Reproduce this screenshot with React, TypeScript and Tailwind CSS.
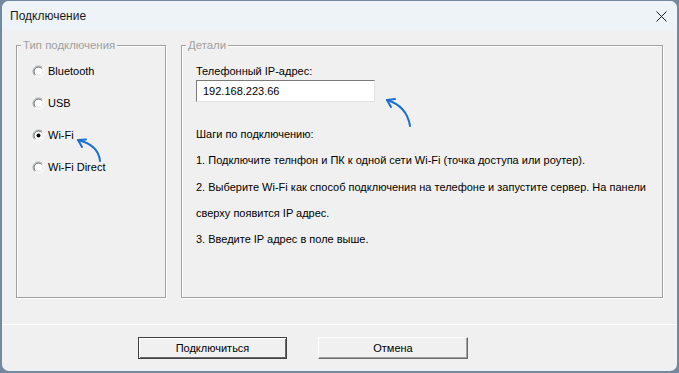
import React from "react";

const Radio: React.FC<{ checked?: boolean }> = ({ checked }) => (
  <svg width="13" height="13" viewBox="0 0 13 13" className="shrink-0">
    <circle cx="6.5" cy="6.5" r="5.5" fill="#fff" stroke="#ffffff" />
    <path d="M2.6 10.4 A5.5 5.5 0 0 1 10.4 2.6" stroke="#a0a0a0" fill="none" />
    <circle cx="6.5" cy="6.5" r="4.5" fill="#fff" stroke="#e3e3e3" />
    <path d="M3.3 9.7 A4.5 4.5 0 0 1 9.7 3.3" stroke="#696969" fill="none" />
    {checked && <circle cx="6.5" cy="6.5" r="2" fill="#000" />}
  </svg>
);

const GroupBox: React.FC<{
  title: string;
  className?: string;
  children: React.ReactNode;
}> = ({ title, className, children }) => (
  <fieldset
    className={`border border-[#a0a0a0] shadow-[inset_1px_1px_0_#fff,1px_1px_0_#fff] ${className ?? ""}`}
  >
    <legend className="ml-[4px] px-[2px] bg-[#f0f0f0] leading-[13px] text-[11.4px] text-[#a0a0a0]">
      {title}
    </legend>
    {children}
  </fieldset>
);

const connectionTypes = [
  { name: "Bluetooth", checked: false },
  { name: "USB", checked: false },
  { name: "Wi-Fi", checked: true },
  { name: "Wi-Fi Direct", checked: false },
];

export default function App() {
  return (
    <div className="relative w-[679px] h-[373px] overflow-hidden bg-[#7389a0] pt-px pl-[2px] font-['Liberation_Sans',Arial,sans-serif] text-[11px] text-black">
      <div className="w-[675px] h-[370px] rounded-[7px] overflow-hidden bg-[#f0f0f0] flex flex-col">
        {/* Title bar */}
        <div className="h-[30px] shrink-0 bg-[#eef3f8] flex items-center justify-between pl-[8px] pr-[10px]">
          <span className="text-[12px] text-[#1a1a1a]">Подключение</span>
          <svg width="11" height="11" viewBox="0 0 11 11">
            <path d="M0.5 0.5 L10.5 10.5 M10.5 0.5 L0.5 10.5" stroke="#1a1a1a" strokeWidth="1" />
          </svg>
        </div>

        {/* Body */}
        <div className="flex-1 flex flex-col">
          <div className="flex gap-[15px] pl-[14px] pt-[8px]">
            <GroupBox title="Тип подключения" className="w-[150px] h-[259px]">
              <div className="flex flex-col gap-[16px] pl-[15px] pt-[11px]">
                {connectionTypes.map((t) => (
                  <label key={t.name} className="h-[16px] flex items-center gap-[3px]">
                    <Radio checked={t.checked} />
                    <span>{t.name}</span>
                  </label>
                ))}
              </div>
            </GroupBox>

            <GroupBox title="Детали" className="w-[482px] h-[259px]">
              <div className="pl-[14px] pt-[13px]">
                <div className="leading-[13px]">Телефонный IP-адрес:</div>
                <div className="mt-[2px] w-[179px] h-[22px] bg-white border border-[#7a7a7a] border-r-[#e3e3e3] border-b-[#e3e3e3] flex items-center pl-[6px]">
                  192.168.223.66
                </div>
                <div className="mt-[19px] leading-[26.3px] whitespace-nowrap">
                  <p>Шаги по подключению:</p>
                  <p>1. Подключите телнфон и ПК к одной сети Wi-Fi (точка доступа или роутер).</p>
                  <p>
                    2. Выберите Wi-Fi как способ подключения на телефоне и запустите сервер. На панели
                    <br />
                    сверху появится IP адрес.
                  </p>
                  <p>3. Введите IP адрес в поле выше.</p>
                </div>
              </div>
            </GroupBox>
          </div>

          {/* Footer */}
          <div className="mt-auto border-t border-white pt-[12px] pb-[12px] pl-[136px] flex gap-[31px]">
            <button className="w-[149px] h-[22px] border border-[#404040] shadow-[inset_1px_1px_0_#fff,inset_-1px_-1px_0_#696969] bg-[#f0f0f0]">
              Подключиться
            </button>
            <button className="w-[150px] h-[22px] border border-white border-r-[#696969] border-b-[#696969] shadow-[inset_-1px_-1px_0_#a0a0a0] bg-[#f0f0f0]">
              Отмена
            </button>
          </div>
        </div>
      </div>

      {/* Annotation arrows */}
      <svg
        className="absolute inset-0 pointer-events-none"
        width="679"
        height="373"
        viewBox="0 0 679 373"
        fill="none"
        stroke="#1a6fd0"
        strokeWidth="2"
        strokeLinecap="round"
        strokeLinejoin="round"
      >
        <path d="M100 161 C 99 150, 90 143, 78 140" />
        <path d="M78 140 L 86 139.5 M78 140 L 82 147" />
        <path d="M410 126 C 408 113, 400 104, 387 100" />
        <path d="M387 100 L 395 99 M387 100 L 391 107" />
      </svg>
    </div>
  );
}
